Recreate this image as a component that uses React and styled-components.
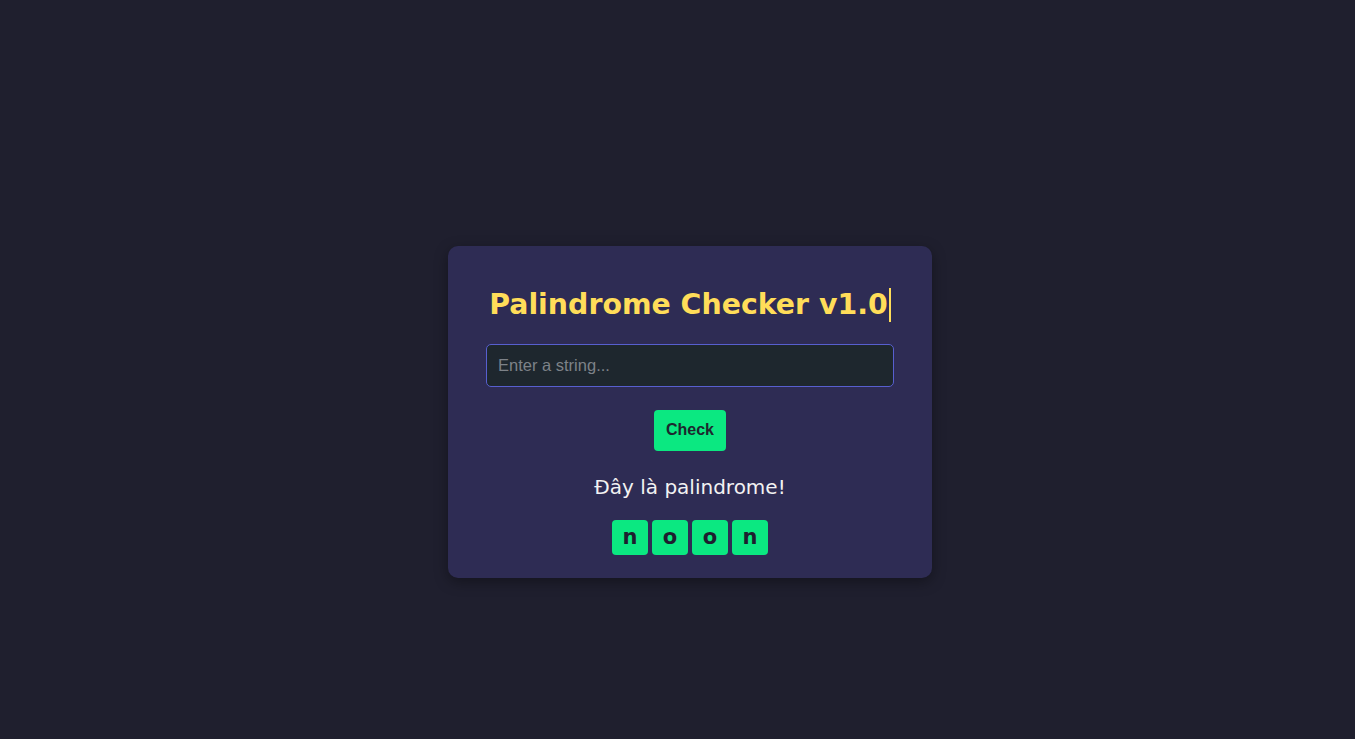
import React from "react";
import styled, { createGlobalStyle } from "styled-components";

const Global = createGlobalStyle`
  *, *::before, *::after { box-sizing: border-box; }
  html, body { margin: 0; padding: 0; background: #1f1f2e; }
  body { font-family: "DejaVu Sans", Verdana, sans-serif; }
`;

const Page = styled.div`
  min-height: 100vh;
  display: flex;
  align-items: center;
  justify-content: center;
  padding: 84px 0 0 25px;
  background: #1f1f2e;
`;

const Card = styled.div`
  width: 484px;
  background: #2e2c54;
  border-radius: 10px;
  padding: 42px 38px 23px;
  box-shadow: 0 4px 14px rgba(0, 0, 0, 0.35);
  display: flex;
  flex-direction: column;
  align-items: center;
`;

const Title = styled.h1`
  margin: 0;
  display: inline-block;
  font-family: "DejaVu Sans", Verdana, sans-serif;
  font-weight: 700;
  font-size: 28.4px;
  line-height: 34px;
  color: #ffdd59;
  border-right: 2px solid #ffdd59;
  padding-right: 1px;
  white-space: nowrap;
`;

const Input = styled.input`
  margin-top: 22px;
  width: 100%;
  height: 43px;
  padding: 0 11px;
  background: #1e272e;
  border: 1px solid #575fcf;
  border-radius: 5px;
  color: #f0f0f0;
  font-family: "Liberation Sans", Arial, sans-serif;
  font-size: 16.5px;
  outline: none;
  &::placeholder { color: #7d8288; }
`;

const Button = styled.button`
  margin-top: 23px;
  height: 41px;
  padding: 0 12px;
  background: #0be881;
  color: #1e272e;
  border: none;
  border-radius: 4px;
  font-family: "Liberation Sans", Arial, sans-serif;
  font-weight: 700;
  font-size: 16px;
  cursor: pointer;
`;

const Result = styled.p`
  margin: 24px 0 0;
  font-family: "DejaVu Sans", Verdana, sans-serif;
  font-size: 20px;
  line-height: 24px;
  color: #f2f2f2;
`;

const Letters = styled.div`
  margin-top: 21px;
  display: flex;
  gap: 4px;
`;

const Letter = styled.span`
  width: 36px;
  height: 35px;
  display: flex;
  align-items: center;
  justify-content: center;
  background: #0be881;
  border-radius: 4px;
  color: #1e1e2f;
  font-family: "DejaVu Sans", Verdana, sans-serif;
  font-weight: 700;
  font-size: 21px;
`;

export default function App() {
  const word = "noon";
  return (
    <>
      <Global />
      <Page>
        <Card>
          <Title>Palindrome Checker v1.0</Title>
          <Input placeholder="Enter a string..." />
          <Button>Check</Button>
          <Result>Đây là palindrome!</Result>
          <Letters>
            {word.split("").map((c, i) => (
              <Letter key={i}>{c}</Letter>
            ))}
          </Letters>
        </Card>
      </Page>
    </>
  );
}
